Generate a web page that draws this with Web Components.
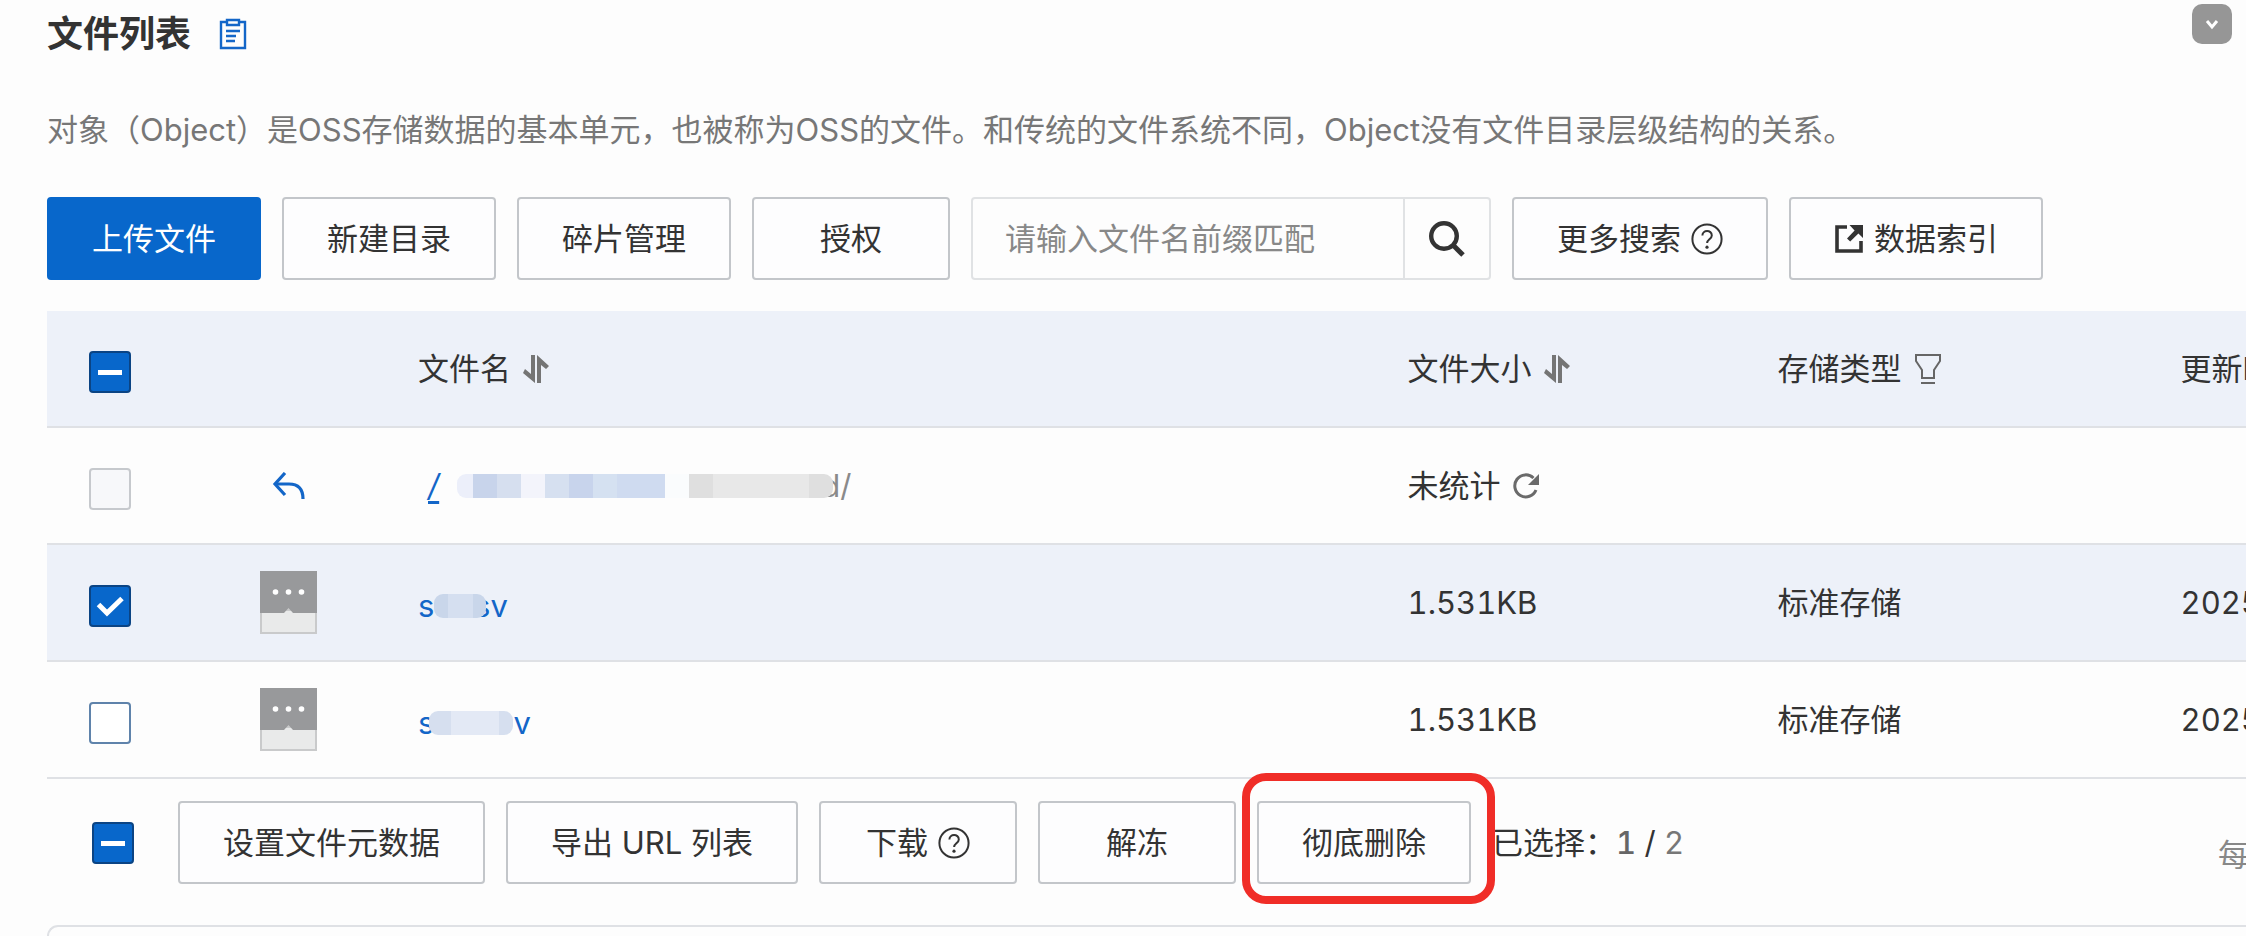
<!DOCTYPE html>
<html lang="zh-CN">
<head>
<meta charset="utf-8">
<title>文件列表</title>
<style>
  body {
    margin: 0;
    background: #fdfdfd;
    color: #333;
    font: 31px/48px Inter, "Noto Sans CJK SC", sans-serif;
    font-optical-sizing: none;
    overflow: hidden;
  }
</style>
</head>
<body>
<oss-file-page></oss-file-page>

<script>
const ICONS = {
  clipboard: [28, 32, `<g fill="none" stroke="#1366c8" stroke-width="2.400"><path d="M8 4H2v26h24V4h-6"/><path d="M8 2h12v5H8z"/><path d="M7 13h14M7 18h10M7 23h9"/></g>`],
  chevron: [16, 16, `<path d="M3 5l5 6 5-6" fill="none" stroke="#fff" stroke-width="3"/>`],
  help: [32, 32, `<g fill="none" stroke="#333" stroke-width="2"><circle cx="16" cy="16" r="14.6"/><path d="M11.4 12.6c0-6 9.4-6 9.4-.2 0 3.800-4.700 4-4.700 7.600"/></g><circle cx="16" cy="24.200" r="1.600" fill="#333"/>`],
  search: [38, 38, `<g fill="none" stroke="#333" stroke-width="4.400"><circle cx="16" cy="16" r="12.800"/><path d="M25 25l10 10" stroke-width="5"/></g>`],
  external: [30, 30, `<path d="M13 3H3v24h24V17" fill="none" stroke="#333" stroke-width="3.600"/><path d="M15.500 1H29v13l-4.600-4.600-8.200 8.200-3.200-3.200 7.600-8z" fill="#333"/>`],
  sort: [26, 28, `<g fill="#757575"><path d="M8 0h4v28L0 18l2-4 6 5z"/><path d="M14 0l12 11-3 3-5-4v18h-4z"/></g>`],
  filter: [28, 32, `<path d="M2 2h24v6l-6 9v8H8v-8L2 8z" fill="none" stroke="#666" stroke-width="2"/><path d="M7 30h14" stroke="#666" stroke-width="2"/>`],
  refresh: [26, 26, `<path d="M23 17A11 11 0 1 1 20.500 5" fill="none" stroke="#6a6a6a" stroke-width="3"/><path d="M26 1v11H15z" fill="#6a6a6a"/>`],
  back: [34, 28, `<g fill="none" stroke="#1366c8" stroke-width="3.200"><path d="M13 1L3 12l10 11"/><path d="M3 12h14c9 0 14 5 14 15"/></g>`],
  file: [57, 63, `<path d="M0 0h57v63H0z" fill="#c9cacb"/><path d="M2 40h53v21H2z" fill="#e9eaea"/><path d="M0 0h57v42H33l-4.500-5-4.500 5H0z" fill="#98999b"/><g fill="#fff"><circle cx="15.500" cy="21" r="2.800"/><circle cx="28.500" cy="21" r="2.800"/><circle cx="41.500" cy="21" r="2.800"/></g>`]
};

class OssIcon extends HTMLElement {
  connectedCallback() {
    const [w, h, body] = ICONS[this.getAttribute('name')];
    this.attachShadow({ mode: 'open' }).innerHTML = `
      <style>
        :host { display: inline-flex; flex: none; }
      </style>
      <svg width="${w}" height="${h}" viewBox="0 0 ${w} ${h}" aria-hidden="true">${body}</svg>`;
  }
}

class OssButton extends HTMLElement {
  connectedCallback() {
    this.attachShadow({ mode: 'open' }).innerHTML = `
      <style>
        :host { display: block; flex: none; }
        button {
          display: flex;
          align-items: center;
          justify-content: center;
          gap: 10px;
          box-sizing: border-box;
          height: 83px;
          min-width: 198px;
          padding: 0 43px;
          border: 2px solid #c3c6ca;
          border-radius: 4px;
          background: #fdfdfe;
          color: #333;
          font: inherit;
          white-space: nowrap;
        }
        :host([primary]) button { background: #0867cb; border-color: #0867cb; color: #fff; }
      </style>
      <button type="button"><slot></slot></button>`;
  }
}

class OssCheckbox extends HTMLElement {
  connectedCallback() {
    this.attachShadow({ mode: 'open' }).innerHTML = `
      <style>
        :host { display: inline-flex; flex: none; }
        label { display: grid; }
        input {
          appearance: none;
          grid-area: 1 / 1;
          box-sizing: border-box;
          width: 42px;
          height: 42px;
          margin: 0;
          border: 2px solid #5f83ab;
          border-radius: 4px;
          background: #fff;
        }
        input:disabled { border-color: #c6c9cd; background: #f7f8fa; }
        input:checked, input:indeterminate { border-color: #0b4484; background: #0867cb; }
        svg { grid-area: 1 / 1; pointer-events: none; }
        path { display: none; fill: none; stroke: #fff; stroke-width: 5; }
        input:checked ~ svg .tick { display: inline; }
        input:indeterminate ~ svg .dash { display: inline; }
      </style>
      <label>
        <input type="checkbox">
        <svg width="42" height="42" viewBox="0 0 42 42">
          <path class="tick" d="M9.500 19.500l8.500 8.500L33 13.500"/>
          <path class="dash" d="M9 21.500h24"/>
        </svg>
      </label>`;
    const input = this.shadowRoot.querySelector('input');
    input.setAttribute('aria-label', this.getAttribute('label'));
    input.checked = this.hasAttribute('checked');
    input.disabled = this.hasAttribute('disabled');
    input.indeterminate = this.hasAttribute('mixed');
  }
}

class OssSearch extends HTMLElement {
  connectedCallback() {
    this.attachShadow({ mode: 'open' }).innerHTML = `
      <style>
        :host {
          display: flex;
          box-sizing: border-box;
          width: 520px;
          height: 83px;
          border: 2px solid #e0e2e4;
          border-radius: 4px;
        }
        input {
          flex: 1;
          min-width: 0;
          padding: 0 32px;
          border: 0;
          background: none;
          font: inherit;
        }
        input::placeholder { color: #888; opacity: 1; }
        button {
          display: flex;
          align-items: center;
          justify-content: center;
          width: 86px;
          padding: 0;
          border: 0;
          border-left: 2px solid #e0e2e4;
          background: none;
        }
      </style>
      <input type="text" placeholder="请输入文件名前缀匹配" aria-label="文件名前缀">
      <button type="button" aria-label="搜索"><oss-icon name="search"></oss-icon></button>`;
  }
}

/* Pixelated strip over a private name, blocks="colour:width ..." */
class OssMosaic extends HTMLElement {
  connectedCallback() {
    const blocks = this.getAttribute('blocks').split(' ').map((block) => {
      const [color, width] = block.split(':');
      return `<i style="background:${color};width:${width}px"></i>`;
    });
    this.attachShadow({ mode: 'open' }).innerHTML = `
      <style>
        :host { display: flex; flex: none; height: 24px; border-radius: 9px; overflow: hidden; z-index: 1; }
      </style>
      ${blocks.join('')}`;
  }
}

class OssFileTable extends HTMLElement {
  connectedCallback() {
    this.attachShadow({ mode: 'open' }).innerHTML = `
      <style>
        :host { display: block; }
        table {
          width: 100%;
          table-layout: fixed;
          border-collapse: separate;
          border-spacing: 0;
          font-variant-numeric: tabular-nums;
        }
        .col-check { width: 171px; }
        .col-icon { width: 158px; }
        .col-name { width: 45%; }
        .col-size { width: 370px; }
        .col-type { width: 403px; }
        th, td {
          box-sizing: border-box;
          height: 117px;
          padding: 0 0 0 42px;
          border-bottom: 2px solid #dfe1e5;
          font-weight: normal;
          text-align: left;
          white-space: nowrap;
        }
        thead tr, .selected { background: #edf1f9; }
        .check, .file { padding-top: 6px; }
        .cell { display: flex; align-items: center; gap: 12px; }
        .back { padding-left: 12px; }
        .name { display: flex; align-items: center; }
        a { color: #1366c8; text-decoration: none; }
        .path { padding-left: 10px; }
        .path a { font-style: italic; text-decoration: underline; text-underline-offset: 4px; margin-right: 18px; }
        .path oss-mosaic { margin-right: -12px; }
        .path span { color: #8a8a8a; }
        .file oss-mosaic { margin: 0 -12px 0 -18px; }
        .file .long { margin: 0 0 0 -5px; }
      </style>
      <table>
        <colgroup>
          <col class="col-check"><col class="col-icon"><col class="col-name">
          <col class="col-size"><col class="col-type"><col>
        </colgroup>
        <thead>
          <tr>
            <th class="check"><div class="cell"><oss-checkbox mixed label="全选"></oss-checkbox></div></th>
            <th></th>
            <th><div class="cell">文件名<oss-icon name="sort"></oss-icon></div></th>
            <th><div class="cell">文件大小<oss-icon name="sort"></oss-icon></div></th>
            <th><div class="cell">存储类型<oss-icon name="filter"></oss-icon></div></th>
            <th>更新时间</th>
          </tr>
        </thead>
        <tbody>
          <tr>
            <td class="check"><div class="cell"><oss-checkbox disabled label="上级目录"></oss-checkbox></div></td>
            <td><div class="cell back"><oss-icon name="back"></oss-icon></div></td>
            <td>
              <div class="name path">
                <a href="#">/</a>
                <oss-mosaic blocks="#eceffa:16 #c8d4eb:24 #d6dfef:24 #f3f4fb:24 #d6e0f0:24 #c8d4ec:24 #d5e1f1:24 #cfdbf0:48 #fafcfd:24 #dfdfdf:24 #e8e8e8:96 #dfdfdf:24"></oss-mosaic>
                <span>d/</span>
              </div>
            </td>
            <td><div class="cell">未统计<oss-icon name="refresh"></oss-icon></div></td>
            <td></td>
            <td></td>
          </tr>
          <tr class="selected">
            <td class="check"><div class="cell"><oss-checkbox checked label="选择文件"></oss-checkbox></div></td>
            <td><div class="cell"><oss-icon name="file"></oss-icon></div></td>
            <td class="file">
              <a class="name" href="#"><span>sc</span><oss-mosaic blocks="#c9d6ea:14 #d5dff0:25 #c9d6ea:13"></oss-mosaic><span>sv</span></a>
            </td>
            <td>1.531KB</td>
            <td>标准存储</td>
            <td>2025</td>
          </tr>
          <tr>
            <td class="check"><div class="cell"><oss-checkbox label="选择文件"></oss-checkbox></div></td>
            <td><div class="cell"><oss-icon name="file"></oss-icon></div></td>
            <td class="file">
              <a class="name" href="#"><span>s</span><oss-mosaic class="long" blocks="#d6dfef:22 #e3e9f5:48 #d6dfef:14"></oss-mosaic><span>v</span></a>
            </td>
            <td>1.531KB</td>
            <td>标准存储</td>
            <td>2025</td>
          </tr>
        </tbody>
      </table>`;
  }
}

class OssBatchBar extends HTMLElement {
  connectedCallback() {
    this.attachShadow({ mode: 'open' }).innerHTML = `
      <style>
        :host { display: flex; align-items: center; gap: 21px; padding: 22px 0 41px 45px; white-space: nowrap; }
        oss-checkbox { margin-right: 23px; }
        .marked { position: relative; }
        .marked::after {
          content: "";
          position: absolute;
          inset: -28px -24px -20px -15px;
          border: 8px solid #f02d27;
          border-radius: 24px;
          pointer-events: none;
        }
        .count { font-variant-numeric: tabular-nums; }
        b { font-weight: 500; color: #666; }
        .total { color: #777; }
        .page-size { width: 28px; margin-left: auto; padding-top: 24px; color: #888; }
      </style>
      <oss-checkbox mixed label="全选"></oss-checkbox>
      <oss-button>设置文件元数据</oss-button>
      <oss-button>导出 URL 列表</oss-button>
      <oss-button>下载<oss-icon name="help"></oss-icon></oss-button>
      <oss-button>解冻</oss-button>
      <div class="marked"><oss-button>彻底删除</oss-button></div>
      <div class="count">已选择：<b>1</b> / <span class="total">2</span></div>
      <div class="page-size">每</div>`;
  }
}

class OssFilePage extends HTMLElement {
  connectedCallback() {
    this.attachShadow({ mode: 'open' }).innerHTML = `
      <style>
        :host { display: flex; flex-direction: column; min-height: 100vh; box-sizing: border-box; padding-left: 47px; }
        header { display: flex; align-items: flex-start; justify-content: space-between; padding: 4px 14px 0 0; }
        .title { display: flex; align-items: center; gap: 28px; }
        h1 { margin: 0; font-size: 36px; line-height: 60px; font-weight: 600; }
        .fold {
          display: flex;
          align-items: center;
          justify-content: center;
          width: 40px;
          height: 40px;
          padding: 0;
          border: 0;
          border-radius: 10px;
          background: #969696;
        }
        p { margin: 42px 0 43px; color: #777; }
        .toolbar { display: flex; gap: 21px; margin-bottom: 31px; }
        .next { flex: 1; border: solid #dfe1e5; border-width: 2px 0 0 2px; border-top-left-radius: 12px; }
      </style>
      <header>
        <div class="title"><h1>文件列表</h1><oss-icon name="clipboard"></oss-icon></div>
        <button class="fold" type="button" aria-label="收起"><oss-icon name="chevron"></oss-icon></button>
      </header>
      <p>对象（Object）是OSS存储数据的基本单元，也被称为OSS的文件。和传统的文件系统不同，Object没有文件目录层级结构的关系。</p>
      <div class="toolbar">
        <oss-button primary>上传文件</oss-button>
        <oss-button>新建目录</oss-button>
        <oss-button>碎片管理</oss-button>
        <oss-button>授权</oss-button>
        <oss-search></oss-search>
        <oss-button>更多搜索<oss-icon name="help"></oss-icon></oss-button>
        <oss-button><oss-icon name="external"></oss-icon>数据索引</oss-button>
      </div>
      <oss-file-table></oss-file-table>
      <oss-batch-bar></oss-batch-bar>
      <div class="next"></div>`;
  }
}

customElements.define('oss-icon', OssIcon);
customElements.define('oss-button', OssButton);
customElements.define('oss-checkbox', OssCheckbox);
customElements.define('oss-search', OssSearch);
customElements.define('oss-mosaic', OssMosaic);
customElements.define('oss-file-table', OssFileTable);
customElements.define('oss-batch-bar', OssBatchBar);
customElements.define('oss-file-page', OssFilePage);
</script>
</body>
</html>
